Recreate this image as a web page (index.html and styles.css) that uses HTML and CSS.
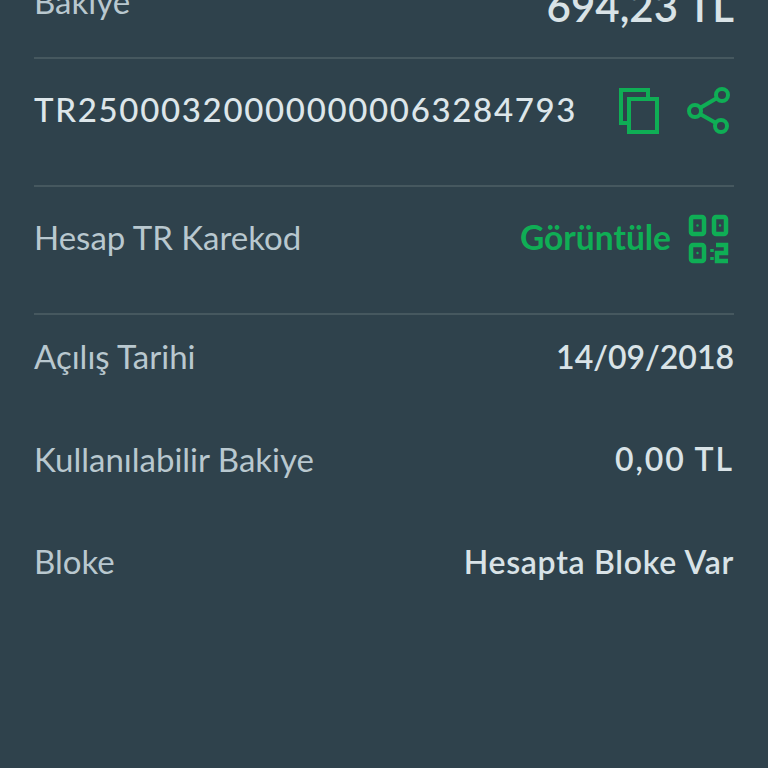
FILE: index.html
```html
<!DOCTYPE html>
<html lang="en">
<head>
    <meta charset="UTF-8">
    <title>Hesap Detayı</title>
    <link rel="stylesheet" href="styles.css">
</head>
<body>
<div class="account">
    <div class="row balance">
        <span class="label">Bakiye</span>
        <span class="value big">694,23 TL</span>
    </div>
    <div class="row">
        <span class="iban">TR250003200000000063284793</span>
        <span class="actions">
            <svg class="icon" width="44" height="50" viewBox="0 0 44 50" fill="none" stroke="#0fae55" stroke-width="4">
                <path d="M10 37H4V4H31V11"/>
                <rect x="12" y="13" width="28" height="33"/>
            </svg>
            <svg class="icon" width="48" height="50" viewBox="0 0 48 50" fill="none" stroke="#0fae55" stroke-width="4">
                <circle cx="36" cy="9" r="6"/>
                <circle cx="9" cy="25" r="6"/>
                <circle cx="35" cy="40" r="6"/>
                <path d="M14 22L31 12M14 28L30 37"/>
            </svg>
        </span>
    </div>
    <div class="row">
        <span class="label">Hesap TR Karekod</span>
        <span class="actions tight">
            <span class="show">Görüntüle</span>
            <svg class="icon" width="46" height="50" viewBox="0 0 46 50" fill="none" stroke="#0fae55" stroke-width="4.5">
                <rect x="3" y="3" width="13" height="17" rx="2"/>
                <rect x="26" y="3" width="12" height="17" rx="2"/>
                <rect x="3" y="31" width="13" height="16" rx="2"/>
                <path d="M28 31H38V39H29V47H40"/>
                <path d="M24 35V38M24 43V46" stroke-width="3.5"/>
                <circle cx="9.5" cy="11.5" r="1.2" fill="#0fae55" stroke="none"/>
                <circle cx="32" cy="11.5" r="1.2" fill="#0fae55" stroke="none"/>
                <circle cx="9.5" cy="39" r="1.2" fill="#0fae55" stroke="none"/>
            </svg>
        </span>
    </div>
    <div class="info">
        <div class="info-row">
            <span class="label">Açılış Tarihi</span>
            <span class="value">14/09/2018</span>
        </div>
        <div class="info-row">
            <span class="label">Kullanılabilir Bakiye</span>
            <span class="value wide">0,00 TL</span>
        </div>
        <div class="info-row">
            <span class="label">Bloke</span>
            <span class="value spaced">Hesapta Bloke Var</span>
        </div>
    </div>
</div>
</body>
</html>
```

FILE: styles.css
```css
html, body {
    height: 100%;
    margin: 0;
    overflow: hidden;
}
body {
    background: #2f424c;
    color: #dde6ea;
    font-family: "Lato", "Open Sans", sans-serif;
}
.account {
    margin: -69px 34px 0 34px;
}
.row {
    box-sizing: border-box;
    display: flex;
    justify-content: space-between;
    align-items: center;
    height: 128px;
    padding-bottom: 26px;
    border-bottom: 2px solid #46585f;
}
.balance {
    align-items: flex-end;
}
.balance .label {
    margin-bottom: 10px;
}
.label {
    font-size: 33px;
    color: #b9c8cf;
}
.value {
    font-size: 32px;
    font-weight: 600;
    color: #d9e3e7;
}
.big {
    font-size: 42px;
}
.wide {
    letter-spacing: 1.9px;
}
.spaced {
    letter-spacing: 0.7px;
}
.iban {
    font-size: 33px;
    font-weight: 500;
    letter-spacing: 1.67px;
    color: #dde6ea;
}
.actions {
    display: flex;
    align-items: center;
    gap: 25px;
}
.tight {
    gap: 17px;
}
.icon {
    margin-top: 4px;
}
.show {
    font-size: 33.5px;
    font-weight: 700;
    color: #0fae55;
}
.info {
    margin-top: -10px;
}
.info-row {
    display: flex;
    justify-content: space-between;
    align-items: center;
    height: 102.5px;
}
```
